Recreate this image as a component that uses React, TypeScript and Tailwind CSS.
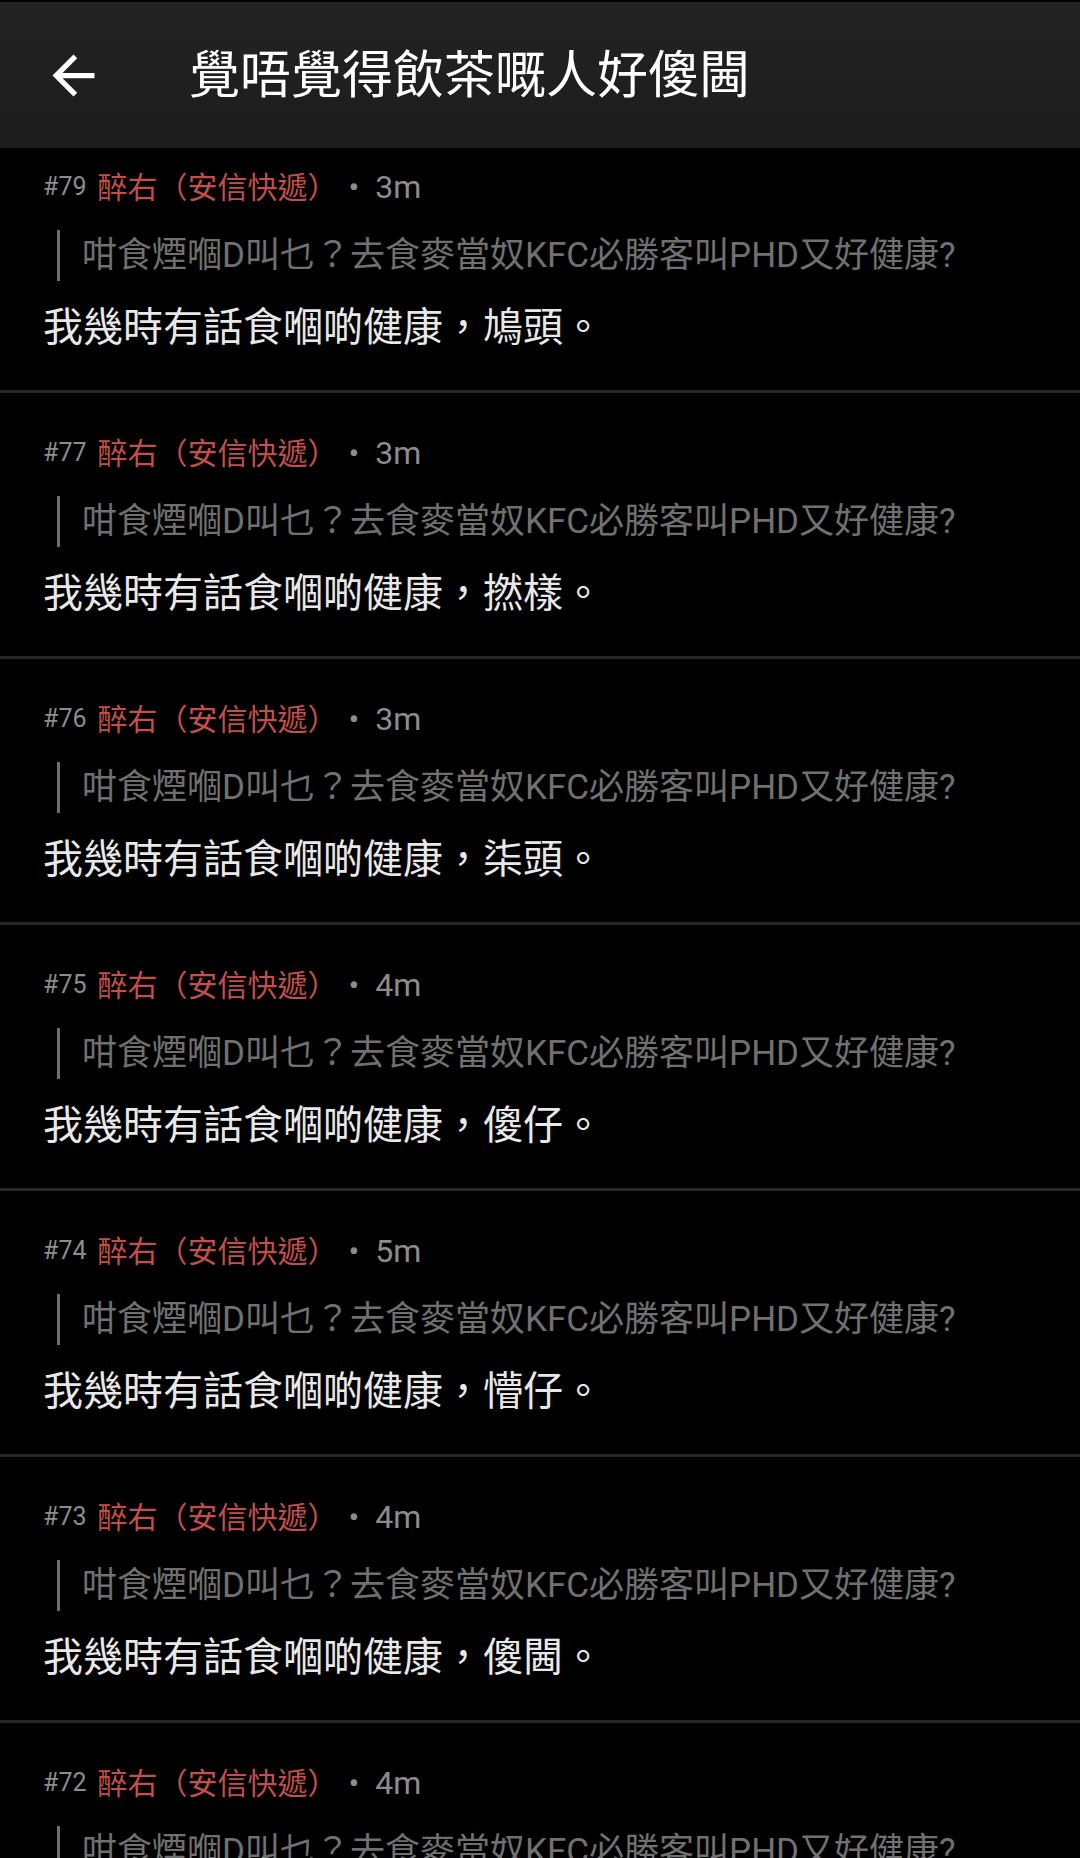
import React from 'react';

type Reply = {
  floor: number;
  time: string;
  ending: string;
};

const replies: Reply[] = [
  { floor: 79, time: '3m', ending: '鳩頭' },
  { floor: 77, time: '3m', ending: '撚樣' },
  { floor: 76, time: '3m', ending: '柒頭' },
  { floor: 75, time: '4m', ending: '傻仔' },
  { floor: 74, time: '5m', ending: '懵仔' },
  { floor: 73, time: '4m', ending: '傻閪' },
  { floor: 72, time: '4m', ending: 'on9' },
];

const QUOTE = '咁食煙嗰D叫乜？去食麥當奴KFC必勝客叫PHD又好健康?';
const FONT = "font-['Roboto','Noto_Sans_CJK_TC','Noto_Sans_CJK_SC',sans-serif]";

function BackArrow() {
  return (
    <svg viewBox="0 0 24 24" className="w-[63px] h-[63px]" fill="#ffffff">
      <path d="M20 11H7.83l5.59-5.59L12 4l-8 8 8 8 1.41-1.41L7.83 13H20v-2z" />
    </svg>
  );
}

function ReplyRow({ reply }: { reply: Reply }) {
  return (
    <article className="px-[43px] pt-[40px] pb-[37px] border-b-[3px] border-[#262626]">
      {/* meta line: floor, username, time */}
      <div className="flex items-center h-[40px] whitespace-nowrap">
        <span className="text-[25px] text-[#8c8c8c] mr-[11px]">#{reply.floor}</span>
        <span className="text-[30px] text-[#c24f4a]">醉右（安信快遞）</span>
        <span className="text-[32px] text-[#8c8c8c] ml-[11px]">•&nbsp;&nbsp;{reply.time}</span>
      </div>
      {/* quoted reply */}
      <div className="flex items-center h-[51px] mt-[23px] ml-[14px] border-l-[3px] border-[#6e6e6e] pl-[22px]">
        <p className="text-[35px] text-[#707070] whitespace-nowrap leading-none">{QUOTE}</p>
      </div>
      <p className="mt-[22px] text-[40px] leading-[50px] text-[#e8e8e8] whitespace-nowrap">
        我幾時有話食嗰啲健康，{reply.ending}。
      </p>
    </article>
  );
}

export default function App() {
  return (
    <div className={`w-[1080px] h-[1858px] overflow-hidden bg-black ${FONT}`}>
      <header className="relative z-10 flex items-center h-[148px] bg-gradient-to-b from-[#232323] to-[#1c1c1c] border-t-2 border-black">
        <button className="ml-[42px] flex items-center justify-center" aria-label="back">
          <BackArrow />
        </button>
        <h1 className="ml-[84px] text-[51px] text-white whitespace-nowrap leading-none">
          覺唔覺得飲茶嘅人好傻閪
        </h1>
      </header>
      <main className="-mt-[21px]">
        {replies.map((r) => (
          <ReplyRow key={r.floor} reply={r} />
        ))}
      </main>
    </div>
  );
}
